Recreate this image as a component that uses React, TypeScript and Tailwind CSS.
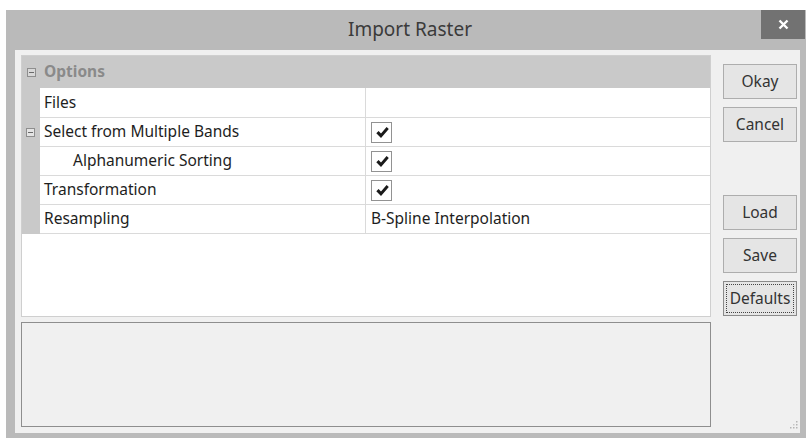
import React from "react";

const font = { fontFamily: '"Noto Sans", "Open Sans", Arial, sans-serif' };

function MinusBox({ light = false }: { light?: boolean }) {
  return (
    <span
      className={`flex h-[9px] w-[9px] items-center justify-center border ${
        light ? "border-[#8e8e8e] bg-[#d8d8d8]" : "border-[#8e8e8e] bg-[#e4e4e4]"
      }`}
    >
      <span className="h-px w-[5px] bg-[#6a6a6a]" />
    </span>
  );
}

function CheckBox() {
  return (
    <span className="flex h-[21px] w-[21px] items-start border border-[#929292] bg-white pl-[4px] pt-[3px]">
      <svg width="13" height="13" viewBox="0 0 13 13">
        <path d="M0.3 7.2 L2.6 5 L5 7.6 L10.6 1 L12.8 3.1 L5 11.9 Z" fill="#1a1a1a" />
      </svg>
    </span>
  );
}

type Row = {
  name: string;
  indent?: boolean;
  expander?: boolean;
  value?: "check" | string;
  h: string;
};

const rows: Row[] = [
  { name: "Files", h: "h-[30px]" },
  { name: "Select from Multiple Bands", expander: true, value: "check", h: "h-[29px]" },
  { name: "Alphanumeric Sorting", indent: true, value: "check", h: "h-[29px]" },
  { name: "Transformation", value: "check", h: "h-[29px]" },
  { name: "Resampling", value: "B-Spline Interpolation", h: "h-[29px]" },
];

function DialogButton({ label, focused = false }: { label: string; focused?: boolean }) {
  return (
    <button
      className={`relative flex h-[35px] w-[74px] items-center justify-center border bg-[#e5e5e5] text-[15.5px] text-[#333] ${
        focused ? "border-[#8a8a8a]" : "border-[#adadad]"
      }`}
    >
      {focused && (
        <span className="absolute inset-[2px] border border-dotted border-[#444]" />
      )}
      <span className="relative">{label}</span>
    </button>
  );
}

export default function App() {
  return (
    <div className="h-[438px] w-[806px] overflow-hidden bg-white pl-[6px] pt-[10px]" style={font}>
      <div className="flex h-[428px] w-[800px] flex-col bg-[#bababa]">
        {/* title bar */}
        <div className="relative flex h-[40px] shrink-0 items-center justify-center pl-[8px] pb-[2px] text-[19px] text-[#3b3b3b]">
          Import Raster
          <div className="absolute right-[1px] top-0 flex h-[29px] w-[44px] items-center justify-center bg-[#727272]">
            <svg width="11" height="11" viewBox="0 0 11 11">
              <path d="M1.5 1.5 L9.5 9.5 M9.5 1.5 L1.5 9.5" stroke="#ffffff" strokeWidth="2.4" />
            </svg>
          </div>
        </div>

        {/* client area */}
        <div className="relative mb-[5px] ml-[9px] mr-[6px] flex flex-1 bg-[#f0f0f0]">
          <div className="ml-[6px] mt-[5px] flex w-[690px] flex-col">
            {/* property grid */}
            <div className="flex h-[262px] flex-col border border-[#cfcfcf] bg-white">
              <div className="flex h-[32px] items-center bg-[#c9c9c9] pl-[5px]">
                <MinusBox light />
                <span className="ml-[8px] text-[15.5px] font-bold text-[#8a8a8a]">Options</span>
              </div>
              {rows.map((r) => (
                <div key={r.name} className={`flex ${r.h}`}>
                  <div className="flex w-[18px] items-center bg-[#c9c9c9] pl-[4px]">
                    {r.expander && <MinusBox />}
                  </div>
                  <div
                    className={`flex w-[326px] items-center border-b border-r border-[#dadada] text-[15.5px] text-[#1e1e1e] ${
                      r.indent ? "pl-[33px]" : "pl-[4px]"
                    }`}
                  >
                    {r.name}
                  </div>
                  <div className="flex flex-1 items-center border-b border-[#dadada] pl-[5px] text-[15.5px] text-[#1e1e1e]">
                    {r.value === "check" ? <CheckBox /> : r.value}
                  </div>
                </div>
              ))}
            </div>
            {/* description area */}
            <div className="mt-[5px] h-[105px] border border-[#8e8e8e] bg-[#f0f0f0]" />
          </div>

          {/* buttons */}
          <div className="ml-[12px] mt-[14px] flex flex-col gap-[8px]">
            <DialogButton label="Okay" />
            <DialogButton label="Cancel" />
            <div className="h-[37px]" />
            <DialogButton label="Load" />
            <DialogButton label="Save" />
            <DialogButton label="Defaults" focused />
          </div>

          {/* size grip */}
          <svg className="absolute bottom-[4px] right-[2px]" width="9" height="9" viewBox="0 0 9 9">
            <rect x="7" y="1" width="1.5" height="1.5" fill="#b4b4b4" />
            <rect x="7" y="4" width="1.5" height="1.5" fill="#b4b4b4" />
            <rect x="4" y="4" width="1.5" height="1.5" fill="#c8c8c8" />
            <rect x="7" y="7" width="1.5" height="1.5" fill="#b4b4b4" />
            <rect x="4" y="7" width="1.5" height="1.5" fill="#b4b4b4" />
            <rect x="1" y="7" width="1.5" height="1.5" fill="#b4b4b4" />
          </svg>
        </div>
      </div>
    </div>
  );
}
